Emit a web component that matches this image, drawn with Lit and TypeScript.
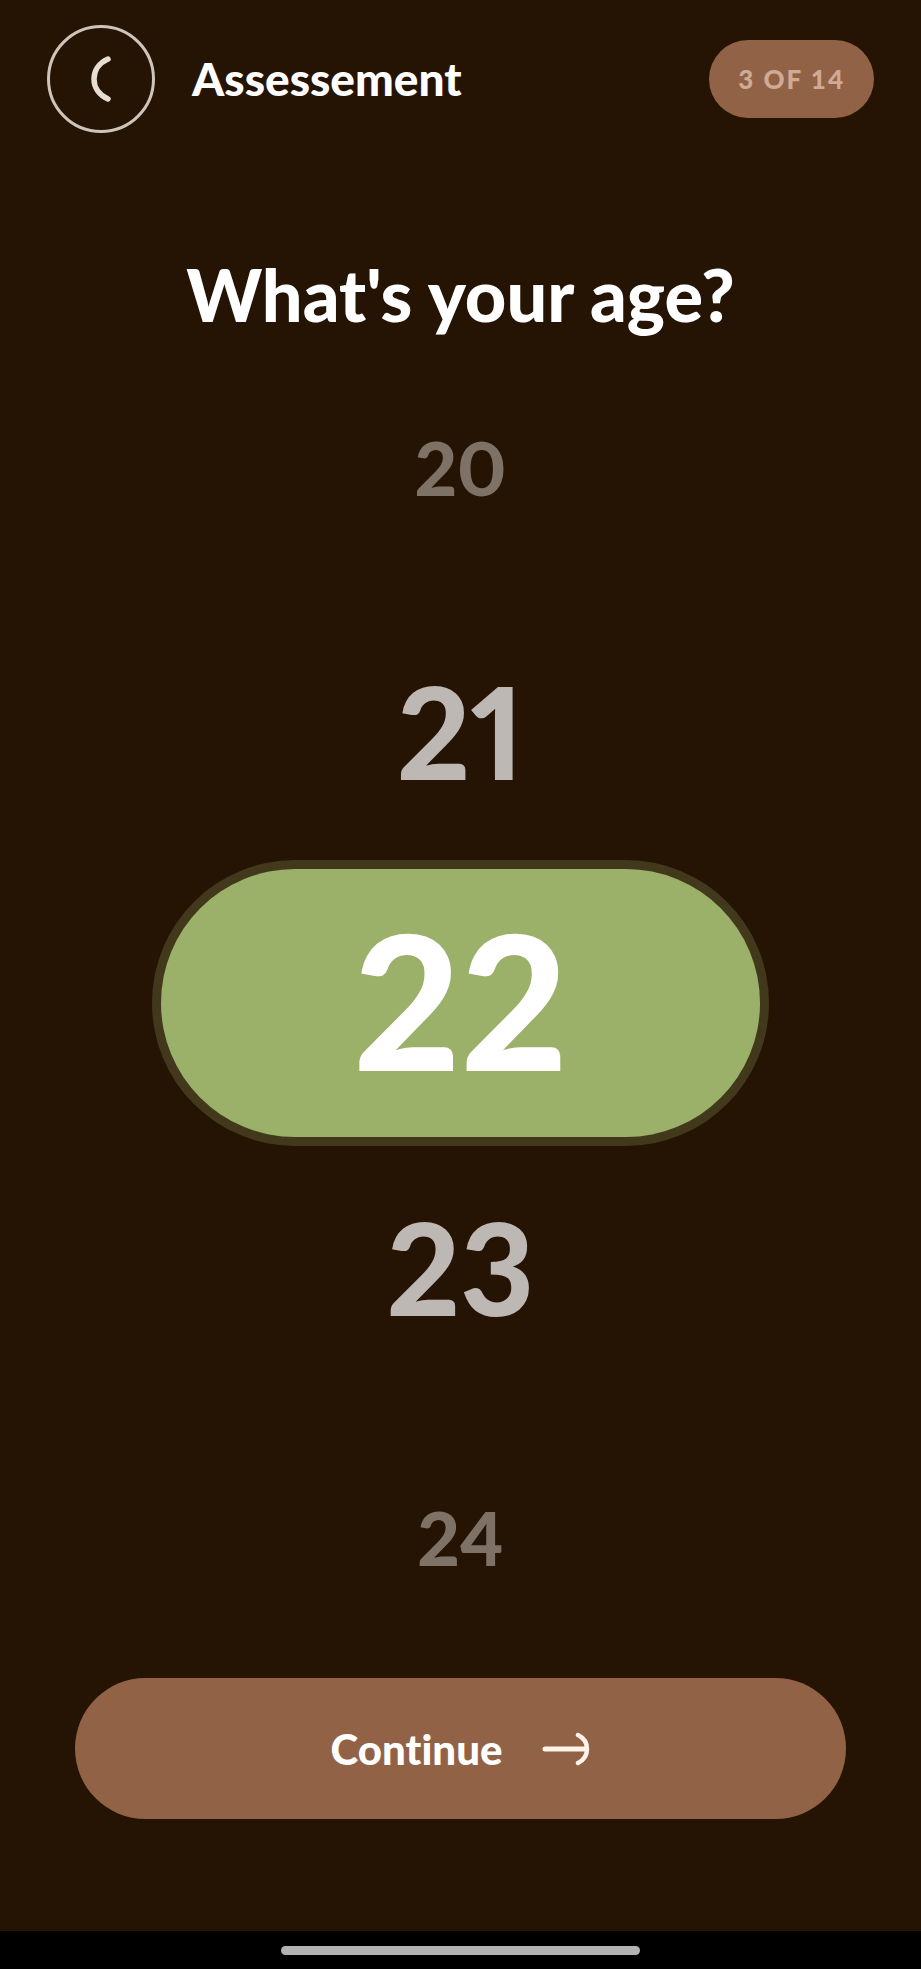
import { LitElement, html, css } from "lit";
import { customElement, state } from "lit/decorators.js";
import { classMap } from "lit/directives/class-map.js";

@customElement("age-picker")
class AgePicker extends LitElement {
  @state() private selected = 22;

  static styles = css`
    :host {
      display: grid;
    }
    .wheel {
      display: grid;
      grid-template-rows: repeat(5, minmax(0, 1fr));
      justify-items: center;
    }
    .age {
      display: flex;
      align-items: center;
      justify-content: center;
      box-sizing: border-box;
      width: 65%;
      border-radius: 134px;
      font-weight: 900;
      font-variant-numeric: proportional-nums;
      line-height: 1;
      cursor: pointer;
    }
    .far {
      font-size: 74px;
      color: #7e7166;
    }
    .near {
      font-size: 128px;
      color: #beb8b4;
      padding-bottom: 8px;
    }
    .current {
      font-size: 186px;
      color: #fff;
      background: #9bb068;
      box-shadow: 0 0 0 9px #42381c;
      padding-bottom: 8px;
    }
    .radio {
      appearance: none;
      width: 0;
      height: 0;
      margin: 0;
      outline: none;
    }
  `;

  render() {
    const ages = [-2, -1, 0, 1, 2].map((step) => this.selected + step);
    return html`
      <div class="wheel" role="radiogroup" aria-label="Age">
        ${ages.map((age) => {
          const distance = Math.abs(age - this.selected);
          return html`
            <label
              class=${classMap({
                age: true,
                current: distance === 0,
                near: distance === 1,
                far: distance === 2,
              })}
              ><input
                class="radio"
                type="radio"
                name="age"
                .value=${String(age)}
                .checked=${distance === 0}
                @change=${() => (this.selected = age)}
              />${age}</label
            >
          `;
        })}
      </div>
    `;
  }
}

@customElement("app-root")
class AppRoot extends LitElement {
  static styles = css`
    :host {
      display: flex;
      flex-direction: column;
      min-height: 100vh;
      background: #251404;
      color: #fff;
      font-family: Lato, "Liberation Sans", sans-serif;
      font-weight: 900;
      font-variant-ligatures: none;
    }
    .header {
      display: flex;
      align-items: center;
      padding: 25px 47px 0;
    }
    .back {
      display: grid;
      place-items: center;
      box-sizing: border-box;
      width: 108px;
      height: 108px;
      padding: 0;
      border: 3px solid #cfc4ba;
      border-radius: 50%;
      background: none;
      color: #e8ddd3;
      cursor: pointer;
    }
    .title {
      margin: 0 auto 0 37px;
      font-size: 46px;
      line-height: 56px;
      font-weight: 900;
    }
    .progress {
      padding: 0 29px;
      border-radius: 39px;
      background: #926247;
      color: #d0aa95;
      font-size: 26px;
      line-height: 78px;
      letter-spacing: 2px;
    }
    .main {
      flex: 1;
      display: flex;
      flex-direction: column;
    }
    .question {
      margin: 121px 24px 0;
      text-align: center;
      font-size: 72px;
      line-height: 80px;
      font-weight: 900;
    }
    .picker {
      flex: 1;
    }
    .continue {
      display: flex;
      align-items: center;
      justify-content: center;
      gap: 40px;
      height: 141px;
      margin: 6px 75px 112px;
      padding: 0;
      border: 0;
      border-radius: 71px;
      background: #926247;
      color: #fff;
      font: inherit;
      font-size: 42px;
      font-variant-ligatures: none;
      cursor: pointer;
    }
    .system {
      display: flex;
      justify-content: center;
      padding: 15px 0 14px;
      background: #000;
    }
    .handle {
      width: 39%;
      height: 9px;
      border-radius: 5px;
      background: #b3b3b3;
    }
    .icon {
      display: block;
      fill: none;
      stroke: currentColor;
      stroke-linecap: round;
    }
    .arrow {
      color: #fff3ea;
    }
  `;

  render() {
    return html`
      <header class="header">
        <button class="back" type="button" aria-label="Back">
          <svg class="icon" width="24" height="50" viewBox="0 0 24 50" stroke-width="5.500">
            <path d="M19 5C10 9 5 16.500 5 25S10 41 19 45" />
          </svg>
        </button>
        <h1 class="title">Assessement</h1>
        <div class="progress">3 OF 14</div>
      </header>
      <main class="main">
        <h2 class="question">What's your age?</h2>
        <age-picker class="picker"></age-picker>
        <button class="continue" type="button">
          Continue
          <svg class="icon arrow" width="48" height="34" viewBox="0 0 48 34" stroke-width="5">
            <path d="M3 17H44" />
            <path d="M36 3C42 6 45 11 45 17S42 28 36 31" stroke-width="4.500" />
          </svg>
        </button>
      </main>
      <footer class="system"><div class="handle"></div></footer>
    `;
  }
}
